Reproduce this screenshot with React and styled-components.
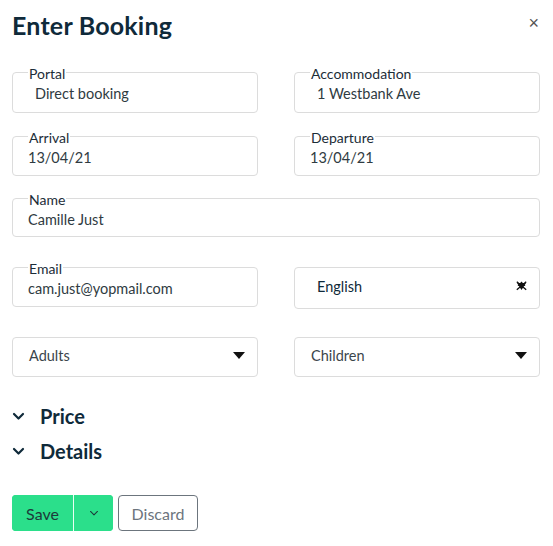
import React from "react";
import styled, { createGlobalStyle } from "styled-components";

const Global = createGlobalStyle`
  html, body { margin: 0; padding: 0; background: #fff; }
  body { font-family: Lato, "Noto Sans", Arial, sans-serif; color: #1c2d38; }
  * { box-sizing: border-box; }
`;

const Panel = styled.div`
  width: 553px;
  padding: 10px 12px 0 12px;
`;

const Header = styled.div`
  display: flex;
  justify-content: space-between;
  align-items: center;
  height: 30px;
`;

const Title = styled.h1`
  margin: 0;
  font-size: 25px;
  font-weight: 700;
  color: #0f2a3a;
  letter-spacing: 0.2px;
`;

const Close = styled.button`
  border: 0;
  background: none;
  padding: 0;
  margin-right: 2px;
  margin-top: -4px;
  color: #555;
  font-size: 18px;
  line-height: 1;
  font-family: Arial, sans-serif;
  cursor: pointer;
`;

const Form = styled.div`
  display: grid;
  grid-template-columns: 246px 246px;
  column-gap: 36px;
  margin-top: 22px;
`;

const Row = styled.div`
  display: contents;
`;

const Field = styled.fieldset`
  margin: 0 0 ${(p) => p.$mb ?? 13}px 0;
  padding: 0 15px;
  min-width: 0;
  border: 1px solid #dcdcdc;
  border-radius: 4px;
  height: ${(p) => p.$h || 51}px;
  grid-column: ${(p) => (p.$full ? "1 / -1" : "auto")};
`;

const Legend = styled.legend`
  padding: 4px 1px 0 1px;
  font-size: 14px;
  line-height: 16px;
  color: #1c2d38;
`;

const Value = styled.div`
  font-size: 14.5px;
  line-height: 18px;
  color: #2f3b42;
  padding-left: ${(p) => p.$indent || 0}px;
  margin-top: 3px;
`;

const Select = styled.div`
  display: flex;
  align-items: center;
  justify-content: space-between;
  align-self: start;
  height: ${(p) => p.$h || 40}px;
  margin-top: ${(p) => p.$mt || 0}px;
  border: 1px solid #dcdcdc;
  border-radius: 4px;
  padding: 0 ${(p) => p.$pr || 12}px ${(p) => p.$pb || 1}px ${(p) => p.$pl || 16}px;
  font-size: 14.5px;
  color: ${(p) => p.$color || "#3b454b"};
`;

const Sections = styled.div`
  margin-top: 21px;
`;

const Section = styled.div`
  display: flex;
  align-items: center;
  gap: 15px;
  height: 35px;
  font-size: 20px;
  font-weight: 700;
  color: #0f2a3a;
`;

const Actions = styled.div`
  display: flex;
  gap: 5px;
  margin-top: 27px;
`;

const SplitButton = styled.div`
  display: flex;
  height: 36px;
  border-radius: 4px;
  overflow: hidden;
  background: #2bdf8b;
`;

const SaveBtn = styled.button`
  border: 0;
  background: #2bdf8b;
  color: #1d3a3a;
  font-family: inherit;
  font-size: 16px;
  width: ${(p) => p.$w}px;
  padding: 0;
  display: flex;
  align-items: center;
  justify-content: center;
  border-left: ${(p) => (p.$divider ? "1px solid #e9fff3" : "0")};
`;

const DiscardBtn = styled.button`
  height: 36px;
  width: 80px;
  border: 1px solid #6c757d;
  border-radius: 4px;
  background: #fff;
  color: #6c757d;
  font-family: inherit;
  font-size: 16px;
`;

const Chevron = ({ w = 13, h = 12, stroke = 2.2 }) => (
  <svg width={w} height={h} viewBox="0 0 13 12" fill="none">
    <path d="M2 4l4.5 4.5L11 4" stroke="currentColor" strokeWidth={stroke} strokeLinecap="round" strokeLinejoin="round" />
  </svg>
);

const Caret = () => (
  <svg width="12" height="7" viewBox="0 0 12 7">
    <path d="M0 0h12L6 7z" fill="#111" />
  </svg>
);

const Blob = () => (
  <svg width="11" height="10" viewBox="0 0 11 10">
    <path d="M1 2h9L5.5 9z" fill="#111" />
    <path d="M5.5 0.5L9.5 5H1.5z" fill="#111" />
    <path d="M0.8 0.8l9.4 8M10.2 0.8l-9.4 8" stroke="#111" strokeWidth="1.3" />
  </svg>
);

export default function App() {
  return (
    <>
      <Global />
      <Panel>
        <Header>
          <Title>Enter Booking</Title>
          <Close aria-label="close">×</Close>
        </Header>
        <Form>
          <Row>
            <Field>
              <Legend>Portal</Legend>
              <Value $indent={7}>Direct booking</Value>
            </Field>
            <Field>
              <Legend>Accommodation</Legend>
              <Value $indent={7}>1 Westbank Ave</Value>
            </Field>
          </Row>
          <Row>
            <Field $mb={12} $h={50}>
              <Legend>Arrival</Legend>
              <Value>13/04/21</Value>
            </Field>
            <Field $mb={12} $h={50}>
              <Legend>Departure</Legend>
              <Value>13/04/21</Value>
            </Field>
          </Row>
          <Row>
            <Field $full $mb={20} $h={49}>
              <Legend>Name</Legend>
              <Value>Camille Just</Value>
            </Field>
          </Row>
          <Row>
            <Field $mb={30} $h={50}>
              <Legend>Email</Legend>
              <Value>cam.just@yopmail.com</Value>
            </Field>
            <Select $h={42} $mt={10} $pl={22} $pr={12} $pb={4} $color="#0f2a3a">
              English
              <Blob />
            </Select>
          </Row>
          <Row>
            <Select $pb={3}>
              Adults
              <Caret />
            </Select>
            <Select $pb={3}>
              Children
              <Caret />
            </Select>
          </Row>
        </Form>
        <Sections>
          <Section>
            <Chevron />
            Price
          </Section>
          <Section>
            <Chevron />
            Details
          </Section>
        </Sections>
        <Actions>
          <SplitButton>
            <SaveBtn $w={61}>Save</SaveBtn>
            <SaveBtn $w={40} $divider>
              <Chevron w={10} h={10} stroke={1.4} />
            </SaveBtn>
          </SplitButton>
          <DiscardBtn>Discard</DiscardBtn>
        </Actions>
      </Panel>
    </>
  );
}
